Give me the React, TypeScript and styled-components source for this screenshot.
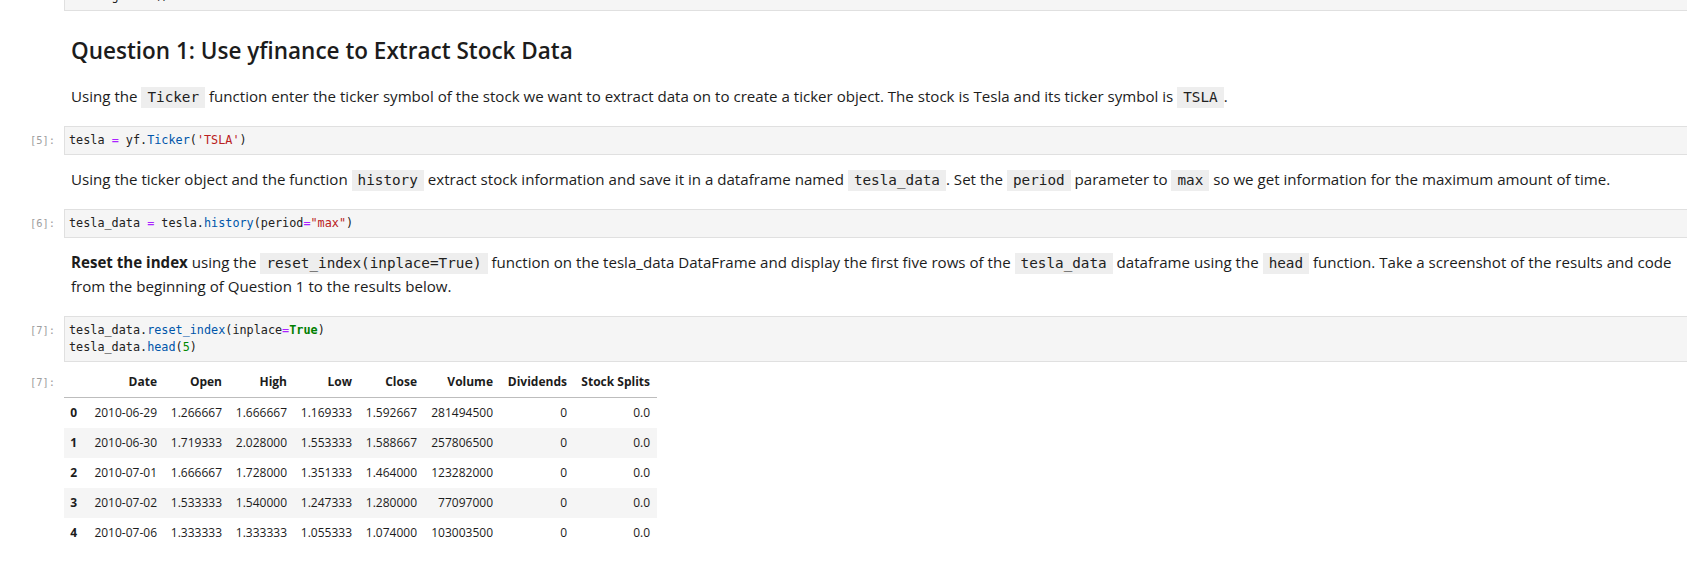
import React from 'react';
import styled, { createGlobalStyle } from 'styled-components';

const SANS = `"Open Sans", "Noto Sans", sans-serif`;
const MONO = `"DejaVu Sans Mono", "Liberation Mono", monospace`;

const GlobalStyle = createGlobalStyle`
  html, body { margin: 0; padding: 0; background: #ffffff; }
  body { overflow: hidden; }
`;

const Notebook = styled.div`
  width: 1687px;
  font-family: ${SANS};
  color: #212121;
`;

const Cell = styled.div<{ $first?: boolean }>`
  display: flex;
  align-items: flex-start;
  margin-top: ${(p) => (p.$first ? '-18px' : '0')};
`;

const Prompt = styled.div<{ $top?: number }>`
  flex: 0 0 64px;
  box-sizing: border-box;
  padding: ${(p) => p.$top ?? 6}px 9px 0 0;
  text-align: right;
  font-family: ${MONO};
  font-size: 10.4px;
  line-height: 17px;
  color: #9e9e9e;
  white-space: pre;
`;

const InputArea = styled.div`
  flex: 1;
  min-width: 0;
  background: #f5f5f5;
  border: 1px solid #e0e0e0;
  border-right: none;
  padding: 5px 5px 5px 4px;
`;

const CodeLine = styled.pre`
  margin: 0;
  font-family: ${MONO};
  font-size: 11.8px;
  line-height: 17px;
  color: #212121;
  white-space: pre;
`;

const tokColors: Record<string, string> = {
  op: '#aa22ff',
  prop: '#0055aa',
  str: '#ba2121',
  num: '#008800',
  kw: '#008000',
};

const Tok = styled.span<{ $k: string }>`
  color: ${(p) => tokColors[p.$k]};
  font-weight: ${(p) => (p.$k === 'kw' ? 700 : 400)};
`;

const Markdown = styled.div`
  flex: 1;
  min-width: 0;
  padding: 12px 12px 18px 7px;
  font-size: 15.1px;
  line-height: 24px;
  color: #1c1c1c;
`;

const Heading = styled.h2`
  margin: 12px 0 18px;
  font-size: 22.5px;
  font-weight: 600;
  line-height: 31px;
  color: #1c1c1c;
`;

const Para = styled.p`
  margin: 0;
`;

const InlineCode = styled.code`
  font-family: ${MONO};
  font-size: 14.3px;
  line-height: 1;
  background: #eeeeee;
  padding: 2px 6px 3px;
  color: #212121;
`;

const OutputArea = styled.div`
  flex: 1;
  margin-top: 5px;
`;

const Table = styled.table`
  border-collapse: separate;
  border-spacing: 0;
  table-layout: fixed;
  width: 593px;
  font-size: 12px;
  line-height: 16px;
  color: #1c1c1c;
`;

const Col = styled.col``;

const HeadCell = styled.th`
  padding: 7px 7px 7px 0;
  text-align: right;
  font-weight: 700;
  border-bottom: 1px solid #bdbdbd;
  white-space: nowrap;
`;

const Row = styled.tr`
  &:nth-child(even) {
    background: #f5f5f5;
  }
`;

const IndexCell = styled.th`
  padding: 7px 7px 7px 0;
  text-align: right;
  font-weight: 700;
`;

const DataCell = styled.td`
  padding: 7px 7px 7px 0;
  text-align: right;
  white-space: nowrap;
`;

const colWidths = [20, 80, 65, 65, 65, 65, 76, 74, 83];
const headers = ['', 'Date', 'Open', 'High', 'Low', 'Close', 'Volume', 'Dividends', 'Stock Splits'];
const rows = [
  ['0', '2010-06-29', '1.266667', '1.666667', '1.169333', '1.592667', '281494500', '0', '0.0'],
  ['1', '2010-06-30', '1.719333', '2.028000', '1.553333', '1.588667', '257806500', '0', '0.0'],
  ['2', '2010-07-01', '1.666667', '1.728000', '1.351333', '1.464000', '123282000', '0', '0.0'],
  ['3', '2010-07-02', '1.533333', '1.540000', '1.247333', '1.280000', '77097000', '0', '0.0'],
  ['4', '2010-07-06', '1.333333', '1.333333', '1.055333', '1.074000', '103003500', '0', '0.0'],
];

export default function App() {
  return (
    <>
      <GlobalStyle />
      <Notebook>
        <Cell $first>
          <Prompt> </Prompt>
          <InputArea>
            <CodeLine>
              {'    fig.'}
              <Tok $k="prop">show</Tok>
              {'()'}
            </CodeLine>
          </InputArea>
        </Cell>

        <Cell>
          <Prompt> </Prompt>
          <Markdown>
            <Heading>Question 1: Use yfinance to Extract Stock Data</Heading>
            <Para>
              Using the <InlineCode>Ticker</InlineCode> function enter the ticker symbol of the stock we want to
              extract data on to create a ticker object. The stock is Tesla and its ticker symbol is{' '}
              <InlineCode>TSLA</InlineCode>.
            </Para>
          </Markdown>
        </Cell>

        <Cell>
          <Prompt>[5]:</Prompt>
          <InputArea>
            <CodeLine>
              {'tesla '}
              <Tok $k="op">=</Tok>
              {' yf.'}
              <Tok $k="prop">Ticker</Tok>
              {'('}
              <Tok $k="str">'TSLA'</Tok>
              {')'}
            </CodeLine>
          </InputArea>
        </Cell>

        <Cell>
          <Prompt> </Prompt>
          <Markdown>
            <Para>
              Using the ticker object and the function <InlineCode>history</InlineCode> extract stock information and
              save it in a dataframe named <InlineCode>tesla_data</InlineCode>. Set the <InlineCode>period</InlineCode>{' '}
              parameter to <InlineCode>max</InlineCode> so we get information for the maximum amount of time.
            </Para>
          </Markdown>
        </Cell>

        <Cell>
          <Prompt>[6]:</Prompt>
          <InputArea>
            <CodeLine>
              {'tesla_data '}
              <Tok $k="op">=</Tok>
              {' tesla.'}
              <Tok $k="prop">history</Tok>
              {'(period'}
              <Tok $k="op">=</Tok>
              <Tok $k="str">"max"</Tok>
              {')'}
            </CodeLine>
          </InputArea>
        </Cell>

        <Cell>
          <Prompt> </Prompt>
          <Markdown>
            <Para>
              <strong>Reset the index</strong> using the <InlineCode>reset_index(inplace=True)</InlineCode> function on
              the tesla_data DataFrame and display the first five rows of the <InlineCode>tesla_data</InlineCode>{' '}
              dataframe using the <InlineCode>head</InlineCode> function. Take a screenshot of the results and code from
              the beginning of Question 1 to the results below.
            </Para>
          </Markdown>
        </Cell>

        <Cell>
          <Prompt>[7]:</Prompt>
          <InputArea>
            <CodeLine>
              {'tesla_data.'}
              <Tok $k="prop">reset_index</Tok>
              {'(inplace'}
              <Tok $k="op">=</Tok>
              <Tok $k="kw">True</Tok>
              {')'}
            </CodeLine>
            <CodeLine>
              {'tesla_data.'}
              <Tok $k="prop">head</Tok>
              {'('}
              <Tok $k="num">5</Tok>
              {')'}
            </CodeLine>
          </InputArea>
        </Cell>

        <Cell>
          <Prompt $top={12}>[7]:</Prompt>
          <OutputArea>
            <Table>
              <colgroup>
                {colWidths.map((w, i) => (
                  <Col key={i} style={{ width: w }} />
                ))}
              </colgroup>
              <thead>
                <tr>
                  {headers.map((h, i) => (
                    <HeadCell key={i}>{h}</HeadCell>
                  ))}
                </tr>
              </thead>
              <tbody>
                {rows.map((r) => (
                  <Row key={r[0]}>
                    <IndexCell>{r[0]}</IndexCell>
                    {r.slice(1).map((v, i) => (
                      <DataCell key={i}>{v}</DataCell>
                    ))}
                  </Row>
                ))}
              </tbody>
            </Table>
          </OutputArea>
        </Cell>
      </Notebook>
    </>
  );
}
